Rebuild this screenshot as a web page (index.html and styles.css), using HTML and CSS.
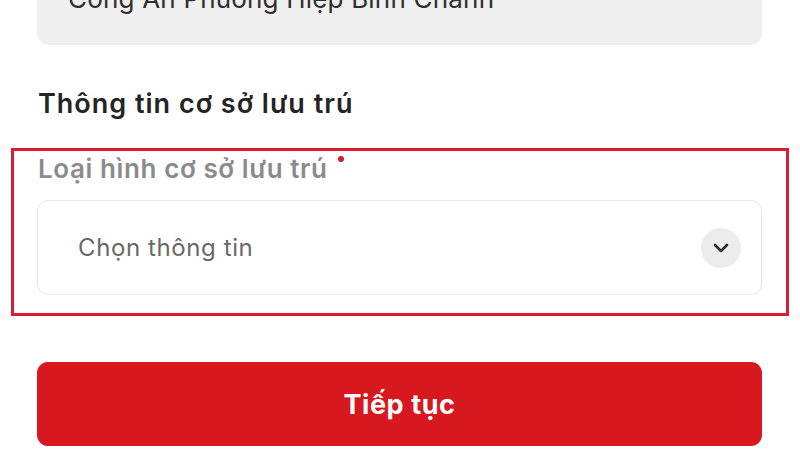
FILE: index.html
```html
<!DOCTYPE html>
<html lang="vi">
<head>
<meta charset="utf-8">
<title>Thông tin cơ sở lưu trú</title>
<link rel="stylesheet" href="styles.css">
</head>
<body>
<main class="page">
  <div class="field-readonly">Công An Phường Hiệp Bình Chánh</div>
  <h2 class="section-title">Thông tin cơ sở lưu trú</h2>
  <section class="highlight">
    <div class="label">Loại hình cơ sở lưu trú<span class="required"></span></div>
    <div class="select">
      <span class="placeholder">Chọn thông tin</span>
      <span class="chevron">
        <svg width="16" height="10" viewBox="0 0 16 10"><polyline points="2,2 8,8 14,2" fill="none" stroke="#2b2b2b" stroke-width="2.6" stroke-linecap="round" stroke-linejoin="round"/></svg>
      </span>
    </div>
  </section>
  <button class="btn-primary">Tiếp tục</button>
</main>
</body>
</html>
```
FILE: styles.css
```css
* { box-sizing: border-box; }
html, body { margin: 0; padding: 0; background: #ffffff; }
body {
  width: 800px;
  height: 450px;
  overflow: hidden;
  font-family: Inter, Roboto, "Noto Sans", "Liberation Sans", sans-serif;
}
.page {
  padding: 0 38px 0 37px;
  display: flex;
  flex-direction: column;
}
.field-readonly {
  margin-top: -40px;
  padding: 24px 31px 31px 31px;
  height: 85px;
  background: #efefef;
  border-radius: 12px;
  font-size: 26px;
  line-height: 30px;
  letter-spacing: 0.2px;
  color: #2f2f2f;
  white-space: nowrap;
}
.section-title {
  margin: 43px 0 0 1px;
  font-size: 27px;
  line-height: 32px;
  font-weight: 600;
  letter-spacing: 1px;
  color: #242424;
}
.highlight {
  margin: 28px -27px 0 -26px;
  border: 3px solid #d7202f;
  padding: 3px 24px 18px 23px;
}
.label {
  font-size: 26px;
  line-height: 30px;
  font-weight: 600;
  letter-spacing: 0.6px;
  color: #8b8b8b;
  margin-left: 1px;
}
.required {
  display: inline-block;
  width: 6px;
  height: 6px;
  border-radius: 50%;
  background: #cf1f2b;
  margin-left: 10px;
  vertical-align: 16px;
}
.select {
  margin-top: 16px;
  height: 95px;
  border: 1px solid #e6e6e6;
  border-radius: 11px;
  display: flex;
  align-items: center;
  justify-content: space-between;
  padding: 0 20px 0 40px;
}
.placeholder {
  font-size: 24px;
  letter-spacing: 0.6px;
  color: #686868;
}
.chevron {
  width: 40px;
  height: 40px;
  border-radius: 50%;
  background: #ececec;
  display: flex;
  align-items: center;
  justify-content: center;
  padding-top: 1px;
}
.btn-primary {
  margin-top: 46px;
  height: 84px;
  border: none;
  border-radius: 11px;
  background: #d7181f;
  color: #ffffff;
  font-family: Inter, Roboto, "Noto Sans", "Liberation Sans", sans-serif;
  font-size: 27px;
  font-weight: 700;
  letter-spacing: 0.6px;
  width: 100%;
}
```
